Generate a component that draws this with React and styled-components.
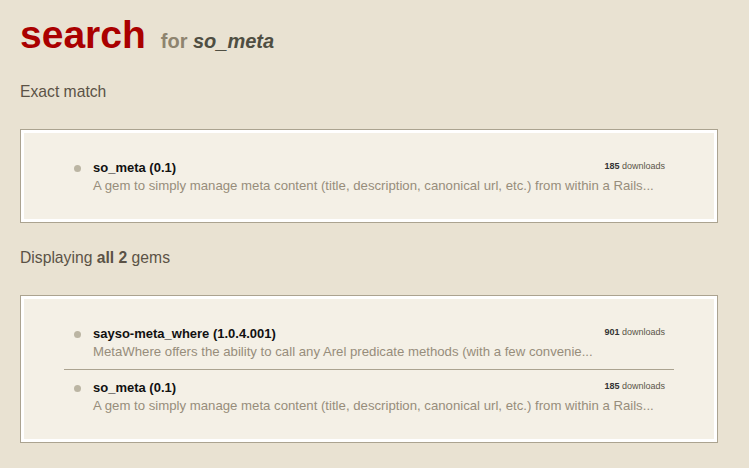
import React from "react";
import styled, { createGlobalStyle } from "styled-components";

const Global = createGlobalStyle`
  html, body { margin: 0; padding: 0; background: #e9e2d2; }
  body { font-family: "Liberation Sans", Arial, Helvetica, sans-serif; }
`;

const Page = styled.div`
  padding: 13px 31px 20px 20px;
`;

const Title = styled.h1`
  margin: 0;
  font-size: 39px;
  line-height: 44px;
  height: 44px;
  font-weight: bold;
  color: #aa0000;
`;

const For = styled.span`
  margin-left: 15px;
  font-size: 20px;
  line-height: 1;
  font-weight: bold;
  color: #8e846f;
`;

const Query = styled.em`
  font-style: italic;
  font-weight: bold;
  color: #4f4e42;
`;

const SectionTitle = styled.h2`
  margin: 25px 0 27px;
  font-size: 15.7px;
  line-height: 20px;
  font-weight: normal;
  color: #5b5246;
  b { font-weight: bold; }
`;

const Panel = styled.div`
  border: 1px solid #aba390;
  box-shadow: inset 0 0 0 3px #ffffff;
  background: #f4f0e6;
  padding: 20px 43px 19px;
`;

const List = styled.ul`
  list-style: none;
  margin: 0;
  padding: 0;
`;

const Row = styled.li`
  display: flex;
  align-items: flex-start;
  padding: 9px 9px 9px 0;
  & + & { border-top: 1px solid #aba390; }
`;

const Bullet = styled.span`
  flex: none;
  width: 7px;
  height: 7px;
  border-radius: 50%;
  background: #bbb5a3;
  margin: 6px 12px 0 10px;
`;

const Body = styled.div`
  flex: 1;
  min-width: 0;
`;

const Head = styled.div`
  display: flex;
  justify-content: space-between;
  align-items: flex-start;
`;

const Name = styled.a`
  font-size: 13px;
  line-height: 18px;
  font-weight: bold;
  color: #111;
  text-decoration: none;
`;

const Downloads = styled.span`
  font-size: 9px;
  line-height: 14px;
  color: #5a5548;
  b { color: #333; font-weight: bold; }
`;

const Desc = styled.p`
  margin: 0;
  font-size: 13.2px;
  line-height: 17px;
  white-space: nowrap;
  color: #978d7b;
`;

const gems = {
  so_meta: {
    name: "so_meta (0.1)",
    downloads: 185,
    desc: "A gem to simply manage meta content (title, description, canonical url, etc.) from within a Rails...",
  },
  sayso: {
    name: "sayso-meta_where (1.0.4.001)",
    downloads: 901,
    desc: "MetaWhere offers the ability to call any Arel predicate methods (with a few convenie...",
  },
};

function Gem({ gem }) {
  return (
    <Row>
      <Bullet />
      <Body>
        <Head>
          <Name>{gem.name}</Name>
          <Downloads>
            <b>{gem.downloads}</b> downloads
          </Downloads>
        </Head>
        <Desc>{gem.desc}</Desc>
      </Body>
    </Row>
  );
}

export default function App() {
  return (
    <>
      <Global />
      <Page>
        <Title>
          search
          <For>
            for <Query>so_meta</Query>
          </For>
        </Title>
        <SectionTitle>Exact match</SectionTitle>
        <Panel>
          <List>
            <Gem gem={gems.so_meta} />
          </List>
        </Panel>
        <SectionTitle>
          Displaying <b>all 2</b> gems
        </SectionTitle>
        <Panel>
          <List>
            <Gem gem={gems.sayso} />
            <Gem gem={gems.so_meta} />
          </List>
        </Panel>
      </Page>
    </>
  );
}
